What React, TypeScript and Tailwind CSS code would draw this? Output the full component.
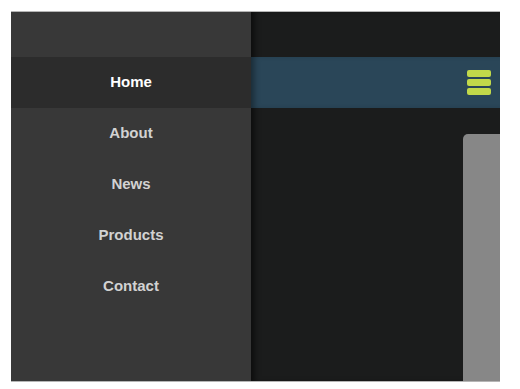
export default function App() {
  const items = ['Home', 'About', 'News', 'Products', 'Contact'];
  return (
    <div className="h-[389px] w-[520px] bg-white pl-[11px] pt-[11px]" style={{ fontFamily: '"Liberation Sans", Arial, sans-serif' }}>
      <div className="flex h-[371px] w-[489px] overflow-hidden border-t border-b border-[#b5b5b5]">
        <nav className="flex w-[240px] shrink-0 flex-col bg-[#383838]">
          <div className="h-[45px]" />
          {items.map((item, i) => (
            <a
              key={item}
              className={
                i === 0
                  ? 'flex h-[51px] items-center justify-center bg-[#2c2c2c] text-[15px] font-bold text-white'
                  : 'flex h-[51px] items-center justify-center text-[15px] font-bold text-[#d2d2d2]'
              }
            >
              {item}
            </a>
          ))}
        </nav>
        <main className="flex flex-1 flex-col bg-[#1b1c1c] shadow-[inset_6px_0_6px_-3px_rgba(0,0,0,0.6)]">
          <div className="h-[45px]" />
          <header className="flex h-[51px] items-center justify-end bg-[#2a4658] pr-[9px] shadow-[inset_6px_0_6px_-3px_rgba(0,0,0,0.4)]">
            <div className="flex w-[24px] flex-col gap-[2px]">
              <span className="h-[7px] rounded-[2px] bg-[#c2d94a]" />
              <span className="h-[7px] rounded-[2px] bg-[#c2d94a]" />
              <span className="h-[7px] rounded-[2px] bg-[#c2d94a]" />
            </div>
          </header>
          <div className="flex flex-1 justify-end pt-[26px]">
            <div className="w-[37px] rounded-tl-[5px] bg-[#878787]" />
          </div>
        </main>
      </div>
    </div>
  );
}
